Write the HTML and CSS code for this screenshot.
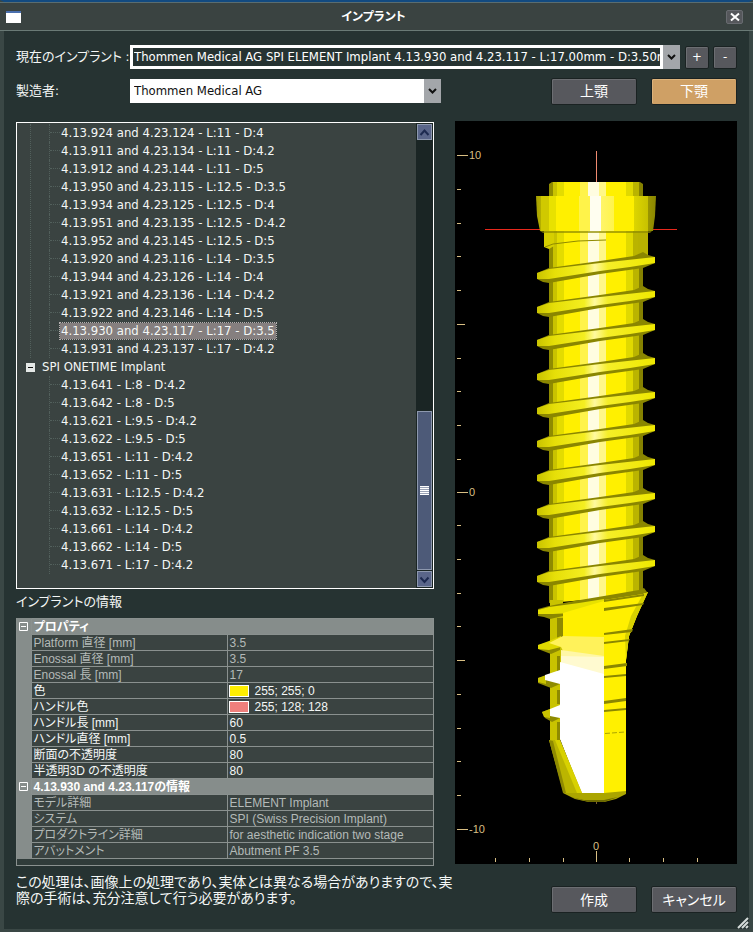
FILE: index.html
```html
<!DOCTYPE html>
<html lang="ja">
<head>
<meta charset="utf-8">
<title>インプラント</title>
<link rel="stylesheet" href="styles.css">
</head>
<body>
<div class="window">
  <header class="titlebar">
    <span class="app-icon"></span>
    <h1 class="title">インプラント</h1>
    <button class="close" type="button" aria-label="閉じる"><svg width="10" height="10" viewBox="0 0 10 10"><path d="M1 1.500L9 8.500M9 1.500L1 8.500"/></svg></button>
  </header>

  <form class="pickers">
    <div class="picker">
      <label class="picker-label" for="implant">現在のインプラント :</label>
      <div class="select-wrap current">
        <select id="implant"><option>Thommen Medical AG SPI ELEMENT Implant 4.13.930 and 4.23.117 - L:17.00mm - D:3.50mm</option></select>
        <svg class="arrow" width="17" height="24" viewBox="0 0 17 24"><path d="M5 10l3.500 3.500L12 10"/></svg>
      </div>
      <button class="btn small" type="button">+</button>
      <button class="btn small" type="button">-</button>
    </div>
    <div class="picker">
      <label class="picker-label" for="maker">製造者:</label>
      <div class="select-wrap maker">
        <select id="maker"><option>Thommen Medical AG</option></select>
        <svg class="arrow" width="17" height="24" viewBox="0 0 17 24"><path d="M5 10l3.500 3.500L12 10"/></svg>
      </div>
      <div class="jaws">
        <button class="btn" type="button">上顎</button>
        <button class="btn active" type="button">下顎</button>
      </div>
    </div>
  </form>

  <main class="content">
    <section class="left">
      <div class="tree-box">
        <div class="tree">
          <ul class="branch first">
            <li><span>4.13.924 and 4.23.124 - L:11 - D:4</span></li>
            <li><span>4.13.911 and 4.23.134 - L:11 - D:4.2</span></li>
            <li><span>4.13.912 and 4.23.144 - L:11 - D:5</span></li>
            <li><span>4.13.950 and 4.23.115 - L:12.5 - D:3.5</span></li>
            <li><span>4.13.934 and 4.23.125 - L:12.5 - D:4</span></li>
            <li><span>4.13.951 and 4.23.135 - L:12.5 - D:4.2</span></li>
            <li><span>4.13.952 and 4.23.145 - L:12.5 - D:5</span></li>
            <li><span>4.13.920 and 4.23.116 - L:14 - D:3.5</span></li>
            <li><span>4.13.944 and 4.23.126 - L:14 - D:4</span></li>
            <li><span>4.13.921 and 4.23.136 - L:14 - D:4.2</span></li>
            <li><span>4.13.922 and 4.23.146 - L:14 - D:5</span></li>
            <li><span class="selected">4.13.930 and 4.23.117 - L:17 - D:3.5</span></li>
            <li><span>4.13.931 and 4.23.137 - L:17 - D:4.2</span></li>
          </ul>
          <div class="group"><svg width="9" height="9" viewBox="0 0 9 9"><rect width="9" height="9" fill="#e4e8e6"/><path d="M2 4.500h5" stroke="#111" stroke-width="1"/></svg>SPI ONETIME Implant</div>
          <ul class="branch">
            <li><span>4.13.641 - L:8 - D:4.2</span></li>
            <li><span>4.13.642 - L:8 - D:5</span></li>
            <li><span>4.13.621 - L:9.5 - D:4.2</span></li>
            <li><span>4.13.622 - L:9.5 - D:5</span></li>
            <li><span>4.13.651 - L:11 - D:4.2</span></li>
            <li><span>4.13.652 - L:11 - D:5</span></li>
            <li><span>4.13.631 - L:12.5 - D:4.2</span></li>
            <li><span>4.13.632 - L:12.5 - D:5</span></li>
            <li><span>4.13.661 - L:14 - D:4.2</span></li>
            <li><span>4.13.662 - L:14 - D:5</span></li>
            <li><span>4.13.671 - L:17 - D:4.2</span></li>
          </ul>
        </div>
        <div class="scrollbar">
          <button class="scroll-btn" type="button" aria-label="上へ"><svg width="13" height="13" viewBox="0 0 13 13"><path d="M2.500 9l4-4.500 4 4.500"/></svg></button>
          <div class="track"><div class="thumb"><i></i></div></div>
          <button class="scroll-btn" type="button" aria-label="下へ"><svg width="13" height="13" viewBox="0 0 13 13"><path d="M2.500 4.500l4 4.500 4-4.500"/></svg></button>
        </div>
      </div>

      <h2 class="info-title">インプラントの情報</h2>
      <div class="grid-box">
      <table class="props">
        <colgroup><col class="col-gut"><col class="col-name"><col></colgroup>
        <tbody>
          <tr class="head"><td class="gut"><svg width="9" height="9" viewBox="0 0 9 9"><path d="M.5.5h8v8h-8zM2 4.500h5"/></svg></td><th colspan="2">プロパティ</th></tr>
          <tr class="dim"><td class="gut"></td><td>Platform 直径 [mm]</td><td>3.5</td></tr>
          <tr class="dim"><td class="gut"></td><td>Enossal 直径 [mm]</td><td>3.5</td></tr>
          <tr class="dim"><td class="gut"></td><td>Enossal 長 [mm]</td><td>17</td></tr>
          <tr><td class="gut"></td><td>色</td><td><span class="swatch yellow"></span>255; 255; 0</td></tr>
          <tr><td class="gut"></td><td>ハンドル色</td><td><span class="swatch pink"></span>255; 128; 128</td></tr>
          <tr><td class="gut"></td><td>ハンドル長 [mm]</td><td>60</td></tr>
          <tr><td class="gut"></td><td>ハンドル直径 [mm]</td><td>0.5</td></tr>
          <tr><td class="gut"></td><td>断面の不透明度</td><td>80</td></tr>
          <tr><td class="gut"></td><td>半透明3D の不透明度</td><td>80</td></tr>
          <tr class="head"><td class="gut"><svg width="9" height="9" viewBox="0 0 9 9"><path d="M.5.5h8v8h-8zM2 4.500h5"/></svg></td><th colspan="2">4.13.930 and 4.23.117の情報</th></tr>
          <tr class="dim"><td class="gut"></td><td>モデル詳細</td><td>ELEMENT Implant</td></tr>
          <tr class="dim"><td class="gut"></td><td>システム</td><td>SPI (Swiss Precision Implant)</td></tr>
          <tr class="dim"><td class="gut"></td><td>プロダクトライン詳細</td><td>for aesthetic indication two stage</td></tr>
          <tr class="dim"><td class="gut"></td><td>アバットメント</td><td>Abutment PF 3.5</td></tr>
        </tbody>
      </table>
      </div>
      <p class="note">この処理は、画像上の処理であり、実体とは異なる場合がありますので、実際の手術は、充分注意して行う必要があります。</p>
    </section>

    <section class="right">
      <svg class="view" viewBox="455 121 282 743" role="img" aria-label="インプラント 3D 表示">
        <defs>
          <linearGradient id="body" x1="549" x2="643" y1="0" y2="0" gradientUnits="userSpaceOnUse">
            <stop offset="0" stop-color="#8f8b00"/><stop offset=".04" stop-color="#8f8b00"/>
            <stop offset=".04" stop-color="#c9c300"/><stop offset=".09" stop-color="#c9c300"/>
            <stop offset=".09" stop-color="#e3dc00"/><stop offset=".16" stop-color="#e3dc00"/>
            <stop offset=".16" stop-color="#fff000"/><stop offset=".33" stop-color="#fff000"/>
            <stop offset=".33" stop-color="#fff34a"/><stop offset=".42" stop-color="#fff34a"/>
            <stop offset=".42" stop-color="#fffde0"/><stop offset=".53" stop-color="#fffde0"/>
            <stop offset=".53" stop-color="#fff788"/><stop offset=".61" stop-color="#fff788"/>
            <stop offset=".61" stop-color="#fff000"/><stop offset=".82" stop-color="#fff000"/>
            <stop offset=".82" stop-color="#e0d900"/><stop offset=".89" stop-color="#e0d900"/>
            <stop offset=".89" stop-color="#bab400"/><stop offset=".96" stop-color="#bab400"/>
            <stop offset=".96" stop-color="#858100"/><stop offset="1" stop-color="#858100"/>
          </linearGradient>
          <linearGradient id="collar" x1="536" x2="656" y1="0" y2="0" gradientUnits="userSpaceOnUse">
            <stop offset="0" stop-color="#a39e00"/><stop offset=".04" stop-color="#b5af00"/>
            <stop offset=".04" stop-color="#d0c900"/><stop offset=".11" stop-color="#d0c900"/>
            <stop offset=".11" stop-color="#e8e100"/><stop offset=".17" stop-color="#e8e100"/>
            <stop offset=".17" stop-color="#fff000"/><stop offset=".36" stop-color="#fff000"/>
            <stop offset=".36" stop-color="#fff34a"/><stop offset=".45" stop-color="#fff34a"/>
            <stop offset=".45" stop-color="#fffef0"/><stop offset=".54" stop-color="#fffef0"/>
            <stop offset=".54" stop-color="#fff56a"/><stop offset=".65" stop-color="#fff44a"/>
            <stop offset=".65" stop-color="#fff000"/><stop offset=".82" stop-color="#fff000"/>
            <stop offset=".82" stop-color="#dcd500"/><stop offset=".93" stop-color="#c8c200"/>
            <stop offset=".93" stop-color="#9b9600"/><stop offset="1" stop-color="#8a8600"/>
          </linearGradient>
          <linearGradient id="ridge" x1="537" x2="655" y1="0" y2="0" gradientUnits="userSpaceOnUse">
            <stop offset="0" stop-color="#c9c300"/><stop offset=".15" stop-color="#e6df08"/>
            <stop offset=".4" stop-color="#f4ee20"/><stop offset=".49" stop-color="#fff9a0"/>
            <stop offset=".6" stop-color="#f5ee28"/><stop offset="1" stop-color="#efe800"/>
          </linearGradient>
          <g id="thread">
            <path fill="#8a8600" d="M549-8L600-15 634-20 643-24 648-21 655-19V-13L643-8 600-2 549 7 543 6 537 3V-3z"/>
            <path fill="url(#ridge)" d="M537-3L549-7 600-13 655-19V-13L630-9 600-5 549 3 537 3z"/>
          </g>
        </defs>

        <g stroke="#d8bf84" fill="none">
          <path d="M457 155.500h11M457 492.500h11M457 829.500h11M457 324.500h8M457 660.500h8M596.500 851v11"/>
          <path d="M457 189.500h4M457 223.500h4M457 256.500h4M457 290.500h4M457 358.500h4M457 391.500h4M457 425.500h4M457 459.500h4M457 525.500h4M457 559.500h4M457 593.500h4M457 626.500h4M457 694.500h4M457 728.500h4M457 761.500h4M457 795.500h4"/>
          <path d="M495.500 858v4M529.500 858v4M563.500 858v4M629.500 858v4M663.500 858v4M697.500 858v4"/>
        </g>
        <g class="scale">
          <text x="469" y="159">10</text><text x="469" y="496">0</text><text x="469" y="833">-10</text><text x="593" y="850">0</text>
        </g>
        <path stroke="#ef8a70" d="M596.500 151v32"/>
        <rect fill="#e8281c" x="485" y="229" width="192" height="1"/>

        <path fill="url(#body)" d="M549 184l3-2h88l3 2v14h-94z"/>
        <path fill="url(#collar)" d="M536 196h120l-1 20-2 15H540l-3-15z"/>
        <path fill="url(#body)" d="M549 231h94v364l-94 8z"/>
        <path fill="#d6cf00" d="M544 231h10v15l-5 3-5-2z"/>
        <path fill="#b8b200" d="M638 231h10v24l-5 4h-5z"/>
        <path fill="#8f8a00" opacity=".7" d="M540 231h112l-2 2H543z"/>
        <path fill="none" stroke="#8f8a00" d="M545 247l8-3 25-3 28-1"/>

        <use href="#thread" y="276"/><use href="#thread" y="310"/><use href="#thread" y="343"/>
        <use href="#thread" y="377"/><use href="#thread" y="411"/><use href="#thread" y="444"/>
        <use href="#thread" y="478"/><use href="#thread" y="512"/><use href="#thread" y="545"/>
        <use href="#thread" y="579"/>

        <path fill="#c9c300" d="M550 600h13v140h-13z"/>
        <path fill="#8e8a00" d="M557 618h6v20h-6zM557 656h3v16h-3zM557 690h3v14h-3zM557 722h3v18h-3z"/>
        <path fill="#fff000" d="M563 607l41-8v190h8l14-2V660l3-24 8-21 10-22-15 2-34 3-39 8z"/>
        <path fill="#8a8600" d="M538 609l11-3 25-5 30-5 35-6 5-2 3 4-4 3-39 6-30 5-36 7z"/>
        <path fill="#e8e100" d="M538 610l11-3 30-4 25-4v7l-32 7-13 3-10-1-11-1z"/>
        <path fill="#8a8600" d="M538 614h15l19-1-9 3-13 3-6-2-6-1z"/>
        <path fill="#fff000" d="M563 613l41-12v36h-41z"/>
        <g fill="#8e8a00">
          <path d="M538 645l11-3h11v8l-9 4-13-5z"/>
          <path d="M538 678l11-3h11v9l-9 4-13-5z"/>
          <path d="M542 712l8-3h10v9l-8 4-7-4z"/>
        </g>
        <path fill="#e0d900" d="M538 645l11-4 12-5v11l-12 3-11-1z"/>
        <path fill="#c9c300" d="M538 678l8-3v9l-8-2zM542 712l8-3v9l-6-1z"/>
        <path fill="#fff25a" d="M549 643l14-7 41 1v20l-41-6-2-4z"/>
        <path fill="#fff7a6" d="M561 650l43 6v12l-43-9z"/>
        <path fill="#fffad0" d="M561 656l43 1v18l-43-5z"/>
        <path fill="#fff" d="M560 662l44 12v119H581l-21-54v-21l-10-2v-7l10-4v-21l-15-4v-5l15-5z"/>
        <path fill="#bbb500" d="M549 740h11l22 53h-18l-2-6z"/>
        <path fill="#8f8a00" d="M549 740l4 1 13 52h-3z"/>
        <path fill="#d8d100" d="M555 740h5l22 53h-5z"/>
        <path fill="#fff000" d="M604 600l39-6 5-2-11 24-8 20-3 24v133h-22z"/>
        <path fill="#d7d000" d="M643 594l5-2-11 24-8 20-3 24-1-24 6-20z"/>
        <path fill="#8a8600" d="M604 600l40-6v2l-40 6zM604 608l40-5-1 2-39 6zM604 633l29-4-1 3-28 3zM604 642l26-3-1 2-25 3zM604 666l23-3v3l-23 3zM604 676l22-2v2l-22 2zM604 701l22-3v3l-22 3zM604 710l22-2v2l-22 2z"/>
        <path stroke="#aaa400" stroke-dasharray="5 2" d="M605 733.500l20-1.500"/>
        <path fill="#aba500" d="M563 793h41l22-2v3l-10 5-12 3h-15l-14-3z"/>
        <path fill="#6c6900" d="M570 797l14 3h20l14-3-14 5h-15z"/>
        <path stroke="#806030" d="M596.500 802v2"/>
      </svg>
      <div class="actions">
        <button class="btn" type="button">作成</button>
        <button class="btn" type="button">キャンセル</button>
      </div>
    </section>
  </main>
  <svg class="grip" width="12" height="12" viewBox="0 0 12 12"><path d="M1 11L11 1M5 11l6-6M9 11l2-2"/></svg>
</div>
</body>
</html>
```
FILE: styles.css
```css
* { box-sizing: border-box; }

body {
  margin: 0;
  min-height: 100vh;
  background: #263332;
  color: #f4f7f6;
  font: 13px/18px "DejaVu Sans Condensed", "Noto Sans CJK JP", sans-serif;
  font-feature-settings: "palt";
}

.window {
  position: relative;
  min-height: 100vh;
  border: solid #3a4745;
  border-width: 0 4px 3px;
  border-top: 2px solid #124a80;
}

.titlebar {
  display: flex;
  align-items: center;
  height: 29px;
  margin: 0 -4px;
  padding: 0 10px 0 6px;
  background: #3a4341;
  border-top: 1px solid #5a6d70;
  border-bottom: 1px solid #6a7a76;
}
.app-icon { width: 15px; height: 12px; background: #fff; border-top: 2px solid #4a6fae; }
.title { flex: 1; margin: 0; text-align: center; font-size: 12px; font-weight: 700; color: #fff; }
.close {
  display: grid; place-items: center;
  width: 17px; height: 14px; padding: 0;
  background: #55575b; border: 1px solid #686b70; border-radius: 2px;
}
.close svg { fill: none; stroke: #fff; stroke-width: 2; }

.pickers { padding: 14px 12px 0; }
.picker { display: flex; align-items: center; height: 24px; margin-bottom: 10px; }
.picker-label { width: 114px; flex: none; font-size: 13px; white-space: nowrap; }
.select-wrap { display: flex; min-width: 0; height: 24px; background: #fff; }
.select-wrap select {
  flex: 1; min-width: 0; padding: 0 4px; border: 0; border-radius: 0;
  appearance: none; background: #fff; color: #111; font: inherit; text-overflow: clip;
}
.current { flex: 1; margin-right: 5px; }
.current select { background: #263332; color: #fff; border: 3px solid #fff; padding: 0 0 0 1px; }
.maker { flex: 0 1 311px; }
.arrow { flex: none; background: #a3a6aa; fill: none; stroke: #111; stroke-width: 2; }

.btn {
  display: grid; place-items: center;
  height: 27px; padding: 0;
  background: #57585d; color: #fff;
  border: 1px solid #1a2222; border-radius: 2px;
  box-shadow: inset 1px 1px #6c6e72;
  font: inherit; font-size: 14px;
  font-feature-settings: "palt";
}
.small { width: 24px; height: 23px; margin-left: 4px; font-size: 13px; }
.small:first-of-type { margin-left: 0; }
.active { background: #cfa065; box-shadow: inset 1px 1px #dcb27b; }
.jaws, .actions { display: grid; grid-template-columns: 86px 86px; gap: 14px; }
.jaws { margin-left: auto; }

.content { display: grid; grid-template-columns: minmax(0, 418fr) minmax(0, 282fr); gap: 21px; padding: 8px 12px 0; }
.left { min-width: 0; }

.tree-box { display: flex; margin-top: 1px; border: 1px solid #fff; background: #3a4341; }
.tree { flex: 1; padding: 1px 0 14px 13px; white-space: nowrap; }
.branch { list-style: none; margin: 0; padding-left: 19px; }
.branch li { height: 18px; padding-left: 10px; border-left: 1px dotted #52605c; }
.branch li::before { content: ""; display: inline-block; width: 10px; margin-left: -10px; border-top: 1px dotted #52605c; vertical-align: 4px; }
.branch.first { border-left: 1px dotted #52605c; padding-left: 18px; }
.branch span { display: inline-block; height: 16px; padding: 0 1px; line-height: 16px; vertical-align: top; margin-top: 1px; }
.branch .selected { background: #857f7f; outline: 1px dotted #b5b0b0; }
.group { display: flex; align-items: center; height: 18px; gap: 7px; margin-left: -4px; }

.scrollbar { display: flex; flex-direction: column; width: 17px; padding: 1px; gap: 1px; background: #1a2524; }
.scroll-btn { display: grid; place-items: center; width: 15px; height: 16px; padding: 0; background: #5a668a; border: 1px solid #8d98ae; }
.scroll-btn svg { fill: none; stroke: #1d2a50; stroke-width: 2; }
.track { flex: 1; display: flex; flex-direction: column; justify-content: flex-end; }
.thumb { display: grid; place-items: center; height: 37%; background: #4d5a78; border: 1px solid #8d98ae; }
.thumb i { width: 9px; height: 9px; background: repeating-linear-gradient(#fff 0 1px, #9aa2b5 1px 2px); }

.info-title { margin: 4px 0 7px; font-size: 13px; line-height: 18px; font-weight: 400; }

.grid-box { padding-bottom: 6px; border: 1px solid #8a918f; border-top: 0; background: #303c3a; }
.props {
  width: 100%; table-layout: fixed; border-collapse: collapse;
  background: #3a4341; font-family: "Liberation Sans", "Noto Sans CJK JP", sans-serif; font-size: 12px;
}
.col-gut { width: 14px; }
.col-name { width: 196px; }
.props td, .props th { height: 16px; padding: 0 2px; border: 1px solid #8a918f; border-width: 1px 0 1px 1px; text-align: left; white-space: nowrap; overflow: hidden; line-height: 12px; }
.props .gut { padding: 0 0 0 2px; background: #868d8b; border-color: #868d8b; border-left: 0; }
.props .gut svg { display: block; fill: none; stroke: #fff; }
.props th { background: #868d8b; color: #fff; font-weight: 700; }
.props .dim { color: #b4bab8; }
.swatch { display: inline-block; width: 20px; height: 12px; margin: 0 6px 0 -1px; border: 1px solid #fff; vertical-align: top; }
.yellow { background: #ffee00; }
.pink { background: #ef7f7c; }

.note { margin: 8px -20px 0 0; font-size: 14px; line-height: 16px; }

.view { display: block; width: 100%; background: #000; }
.scale text { fill: #d8bf84; font: 11px "Liberation Sans", sans-serif; }
.actions { justify-content: end; margin-top: 22px; }

.grip { position: absolute; right: 0; bottom: 0; fill: none; stroke: #d5dcda; stroke-width: 2; }
```
